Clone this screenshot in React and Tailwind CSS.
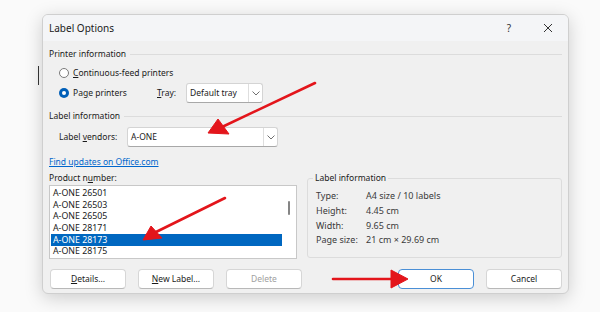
import React from 'react';

const font = { fontFamily: '"Noto Sans", "Open Sans", sans-serif' };

const Chevron = () => (
  <svg width="8" height="5" viewBox="0 0 8 5" className="text-[#606060]">
    <path d="M0.5 0.5 L4 4 L7.5 0.5" fill="none" stroke="currentColor" strokeWidth="0.9" />
  </svg>
);

const Select = ({ value, className }) => (
  <div className={`flex h-[20px] items-stretch rounded-[3px] border border-[#d4d4d4] border-b-[#a8a8a8] bg-white ${className}`}>
    <div className="flex flex-1 items-center pl-[3px] text-[8.5px] text-[#1a1a1a]">{value}</div>
    <div className="flex w-[14px] items-center justify-center border-l border-[#dedede]">
      <Chevron />
    </div>
  </div>
);

const GroupHeader = ({ children }) => (
  <div className="flex h-[12px] items-center gap-[4px]">
    <span className="text-[8.5px] text-[#1a1a1a]">{children}</span>
    <div className="h-px flex-1 bg-[#dcdcdc]" />
  </div>
);

const Button = ({ children, primary, disabled }) => (
  <div
    className={`flex h-[20px] w-[76px] items-center justify-center rounded-[4px] border bg-white text-[8.5px] ${
      primary ? 'border-[#4a8fd6]' : 'border-[#d6d6d6] border-b-[#b8b8b8]'
    } ${disabled ? 'bg-[#fbfbfb] text-[#a0a0a0]' : 'text-[#1a1a1a]'}`}
  >
    {children}
  </div>
);

const products = ['A-ONE 26501', 'A-ONE 26503', 'A-ONE 26505', 'A-ONE 28171', 'A-ONE 28173', 'A-ONE 28175'];

const info = [
  ['Type:', 'A4 size / 10 labels'],
  ['Height:', '4.45 cm'],
  ['Width:', '9.65 cm'],
  ['Page size:', '21 cm \u00d7 29.69 cm'],
];

export default function App() {
  return (
    <div className="relative h-[312px] w-[600px] overflow-hidden bg-[#fafafa]" style={font}>
      <div className="absolute left-[38px] top-[66px] h-[19px] w-px bg-[#333]" />

      <div className="pl-[42px] pt-[14px]">
        <div className="h-[280px] w-[527px] overflow-hidden rounded-[6px] border border-[#cfcfcf] bg-[#f0f0f0] shadow-[0_4px_18px_rgba(0,0,0,0.18)]">
          {/* title bar */}
          <div className="flex h-[26px] items-center bg-[#f4f5f7] pl-[6px]">
            <span className="flex-1 text-[10px] text-[#1a1a1a]">Label Options</span>
            <span className="mr-[32px] text-[10px] text-[#333]">?</span>
            <svg width="10" height="10" viewBox="0 0 10 10" className="mr-[15px]">
              <path d="M1 1 L9 9 M9 1 L1 9" stroke="#333" strokeWidth="1" />
            </svg>
          </div>

          <div className="px-[6px]">
            <div className="mt-[7px]">
              <GroupHeader>Printer information</GroupHeader>
            </div>

            <div className="ml-[10px] mt-[7px] flex h-[12px] items-center gap-[4px]">
              <div className="h-[10px] w-[10px] rounded-full border border-[#7a7a7a] bg-white" />
              <span className="text-[8.5px] text-[#1a1a1a]">
                <u>C</u>ontinuous-feed printers
              </span>
            </div>

            <div className="ml-[10px] mt-[4px] flex h-[20px] items-center">
              <div className="flex h-[10px] w-[10px] items-center justify-center rounded-full bg-[#005fb8]">
                <div className="h-[4px] w-[4px] rounded-full bg-white" />
              </div>
              <span className="ml-[4px] w-[84px] text-[8.5px] text-[#1a1a1a]">
                Pa<u>g</u>e printers
              </span>
              <span className="w-[29px] text-[8.5px] text-[#1a1a1a]">
                <u>T</u>ray:
              </span>
              <Select value="Default tray" className="w-[77px]" />
            </div>

            <div className="mt-[7px]">
              <GroupHeader>Label information</GroupHeader>
            </div>

            <div className="ml-[10px] mt-[5px] flex h-[20px] items-center">
              <span className="w-[68px] text-[8.5px] text-[#1a1a1a]">
                Label <u>v</u>endors:
              </span>
              <Select value="A-ONE" className="w-[151px]" />
            </div>

            <div className="mt-[9px] flex h-[12px] items-center">
              <span className="text-[8.5px] text-[#0066cc] underline">Find updates on Office.com</span>
            </div>

            <div className="mt-[4px] flex gap-[10px]">
              <div className="w-[249px]">
                <div className="flex h-[12px] items-center text-[8.5px] text-[#1a1a1a]">
                  Product n<u>u</u>mber:
                </div>
                <div className="mt-[1px] flex h-[74px] border border-[#c8c8c8] bg-white">
                  <div className="flex-1 pl-px pt-[2px]">
                    {products.map((p, i) => (
                      <div
                        key={p}
                        className={`flex h-[11.6px] items-center pl-[2px] text-[8.8px] ${
                          i === 4 ? 'bg-[#0067c0] text-white' : 'text-[#1a1a1a]'
                        }`}
                      >
                        {p}
                      </div>
                    ))}
                  </div>
                  <div className="w-[14px] pl-[6px] pt-[15px]">
                    <div className="h-[14px] w-[2px] rounded-full bg-[#858585]" />
                  </div>
                </div>
              </div>

              <fieldset className="h-[86px] w-[256px] rounded-[3px] border border-[#dcdcdc] pl-[8px]">
                <legend className="ml-[-3px] px-[2px] text-[8.5px] text-[#1a1a1a]">Label information</legend>
                <div className="mt-[4px]">
                  {info.map(([k, v]) => (
                    <div key={k} className="flex h-[14.7px] items-center text-[9px] text-[#3a3a3a]">
                      <span className="w-[50px]">{k}</span>
                      <span>{v}</span>
                    </div>
                  ))}
                </div>
              </fieldset>
            </div>

            <div className="mt-[10px] flex">
              <div className="ml-px flex gap-[12px]">
                <Button>
                  <span>
                    <u>D</u>etails...
                  </span>
                </Button>
                <Button>
                  <span>
                    <u>N</u>ew Label...
                  </span>
                </Button>
                <Button disabled>Delete</Button>
              </div>
              <div className="ml-auto flex gap-[12px]">
                <Button primary>OK</Button>
                <Button>Cancel</Button>
              </div>
            </div>
          </div>
        </div>
      </div>

      <svg className="pointer-events-none absolute left-0 top-0" width="600" height="312" viewBox="0 0 600 312">
        <g fill="#e3151b" stroke="#e3151b">
          <line x1="315" y1="83" x2="222" y2="127" strokeWidth="2.6" strokeLinecap="round" />
          <polygon points="208,133 218,119 229,134" strokeWidth="1" strokeLinejoin="round" />
          <line x1="225" y1="198" x2="156" y2="232" strokeWidth="2.6" strokeLinecap="round" />
          <polygon points="143,240 151,226 162,238" strokeWidth="1" strokeLinejoin="round" />
          <line x1="333" y1="279" x2="394" y2="279" strokeWidth="2.6" strokeLinecap="round" />
          <polygon points="408,279 391,270 391,288" strokeWidth="1" strokeLinejoin="round" />
        </g>
      </svg>
    </div>
  );
}
